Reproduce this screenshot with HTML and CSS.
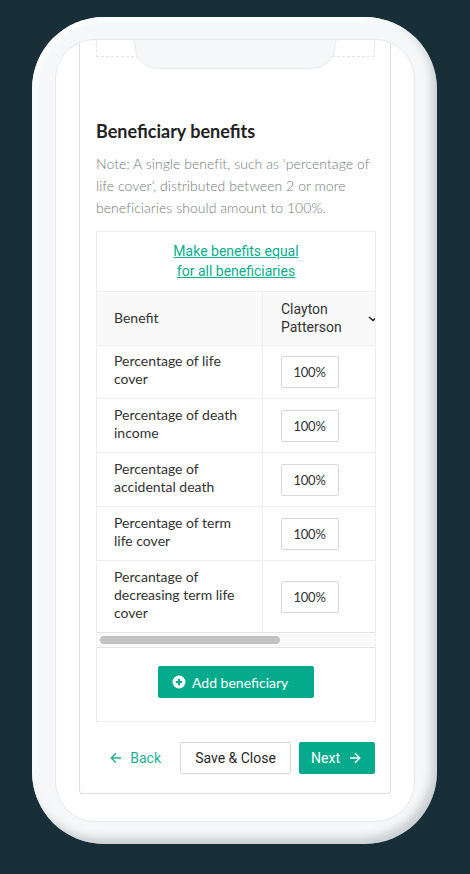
FILE: index.html
```html
<!DOCTYPE html>
<html lang="en">
<head>
<meta charset="utf-8">
<title>Beneficiary benefits</title>
<link rel="stylesheet" href="styles.css">
</head>
<body>
<div class="phone">
  <div class="screen">
    <svg class="notch" width="214" height="31" viewBox="0 0 214 31"><path d="M0 .5H2C6 .5 7 3 7 7C7 20 17 29.5 33 29.5H181C197 29.5 207 20 207 7C207 3 208 .5 212 .5H214V-1H0Z" fill="#f6f7f8" stroke="#e4e9ec"/></svg>
    <div class="card">
      <div class="dashed"></div>
      <h2 class="title">Beneficiary benefits</h2>
      <p class="note">Note: A single benefit, such as ‘percentage of life cover’, distributed between 2 or more beneficiaries should amount to 100%.</p>
      <div class="panel">
        <div class="equal"><a href="#">Make benefits equal</a><br><a href="#">for all beneficiaries</a></div>
        <div class="row head">
          <div class="c1">Benefit</div>
          <div class="c2 name">Clayton<br>Patterson
            <svg class="chev" width="10" height="6" viewBox="0 0 10 6"><path d="M1 1l4 3.5L9 1" fill="none" stroke="#222" stroke-width="1.6"/></svg>
          </div>
        </div>
        <div class="row first"><div class="c1">Percentage of life cover</div><div class="c2"><div class="input">100%</div></div></div>
        <div class="row"><div class="c1">Percentage of death income</div><div class="c2"><div class="input">100%</div></div></div>
        <div class="row"><div class="c1">Percentage of accidental death</div><div class="c2"><div class="input">100%</div></div></div>
        <div class="row"><div class="c1">Percentage of term life cover</div><div class="c2"><div class="input">100%</div></div></div>
        <div class="row last"><div class="c1">Percantage of decreasing term life cover</div><div class="c2"><div class="input">100%</div></div></div>
        <div class="scroll"><div class="thumb"></div></div>
        <div class="add">
          <button class="btn-add">
            <svg width="14" height="14" viewBox="0 0 14 14"><circle cx="7" cy="7" r="6.5" fill="#fff"/><path d="M7 3.8v6.4M3.8 7h6.4" stroke="#03ab8c" stroke-width="2"/></svg>
            Add beneficiary
          </button>
        </div>
      </div>
      <div class="actions">
        <a class="back" href="#"><svg width="12" height="12" viewBox="0 0 12 12"><path d="M11 6H1.5M6 1.2L1.2 6 6 10.8" fill="none" stroke="#1fb094" stroke-width="1.3"/></svg>Back</a>
        <button class="save">Save &amp; Close</button>
        <button class="next">Next<svg width="12" height="12" viewBox="0 0 12 12"><path d="M1 6h9.5M6 1.2L10.8 6 6 10.8" fill="none" stroke="#fff" stroke-width="1.3"/></svg></button>
      </div>
    </div>
  </div>
</div>
</body>
</html>
```
FILE: styles.css
```css
* { box-sizing: border-box; }
html, body { margin: 0; height: 874px; overflow: hidden; }
body { background: #182f38; padding: 17px 0 0 32px; font-family: "Lato", "Liberation Sans", sans-serif; }
.phone {
  width: 405px; height: 827px; padding: 22px 22px 22px 23px;
  border-radius: 72px;
  background: #f6f7f8;
  box-shadow: inset -5px -6px 9px rgba(110,120,130,.32), inset 3px 3px 6px #fff;
}
.screen {
  position: relative; width: 360px; height: 783px; overflow: hidden;
  background: #fff; border: 1px solid #e4e9ec; border-radius: 40px;
}
.notch { position: absolute; top: -1px; left: 72px; overflow: visible; }
.card {
  margin: 0 23px; height: 754px; padding: 0 15px 0 16px;
  border: 1px solid #dcdfe2; border-top: 0; border-radius: 0 0 4px 4px;
}
.dashed { height: 17px; border: 1px dashed #e2e4e6; border-top: 0; }
.title { margin: 62px 0 0; font-size: 18px; line-height: 24px; font-weight: 700; color: #222; }
.note { margin: 10px 0 0; font-size: 14px; letter-spacing: .05px; line-height: 22px; font-weight: 300; color: #74797c; }
.panel { margin-top: 12px; width: 280px; height: 491px; border: 1px solid #eeeeee; font-size: 14px; color: #333; }
.equal { height: 60px; padding-top: 9px; text-align: center; line-height: 20px; border-bottom: 1px solid #eee; font-family: "Roboto", sans-serif; }
.equal a { color: #09ad8f; }
.row { display: flex; height: 54px; border-bottom: 1px solid #eee; line-height: 18px; }
.row.first { height: 53px; }
.row.last { height: 72px; border-bottom: 1px solid #e4e4e4; }
.row.head { height: 54px; background: #f9f9f9; overflow: hidden; }
.c1 { width: 166px; padding: 0 17px 3px; border-right: 1px solid #eee; display: flex; align-items: center; }
.first .c1 { padding-bottom: 5px; }
.head .c1 { padding-bottom: 1px; }
.c2 { flex: 1; padding-left: 18px; display: flex; align-items: center; position: relative; min-width: 0; }
.name { display: block; padding-top: 8px; font-family: "Roboto", sans-serif; }
.chev { position: absolute; right: -3px; top: 24px; }
.input { width: 58px; height: 32px; border: 1px solid #d8d8d8; border-radius: 2px; text-align: center; line-height: 31px; padding-right: 1px; background: #fff; font-size: 13px; letter-spacing: -.2px; }
.scroll { height: 15px; background: #f9f9f9; border-bottom: 1px solid #e4e4e4; padding: 3px; }
.thumb { width: 180px; height: 8px; border-radius: 4px; background: #c2c2c2; }
.add { display: flex; justify-content: center; padding-top: 18px; }
.btn-add {
  width: 156px; height: 32px; padding: 0 0 0 14px; display: flex; align-items: center; gap: 6px;
  border: 0; border-radius: 2px; background: #03ab8c; color: #fff; font: 14px "Lato", sans-serif;
}
.actions { display: flex; justify-content: flex-end; align-items: center; gap: 8px; margin-top: 20px; width: 279px; }
.back { display: flex; align-items: center; gap: 8px; color: #1fb094; text-decoration: none; font: 14px "Roboto", sans-serif; margin-right: 11px; }
.save { width: 111px; height: 32px; border: 1px solid #d6d8d9; border-radius: 2px; background: #fff; color: #2a2a2a; font: 14px "Roboto", sans-serif; padding: 0; }
.next { width: 76px; height: 32px; border: 0; border-radius: 2px; background: #03ab8c; color: #fff; font: 14px "Roboto", sans-serif; display: flex; align-items: center; justify-content: center; gap: 9px; padding: 0 2px 0 0; }
```
